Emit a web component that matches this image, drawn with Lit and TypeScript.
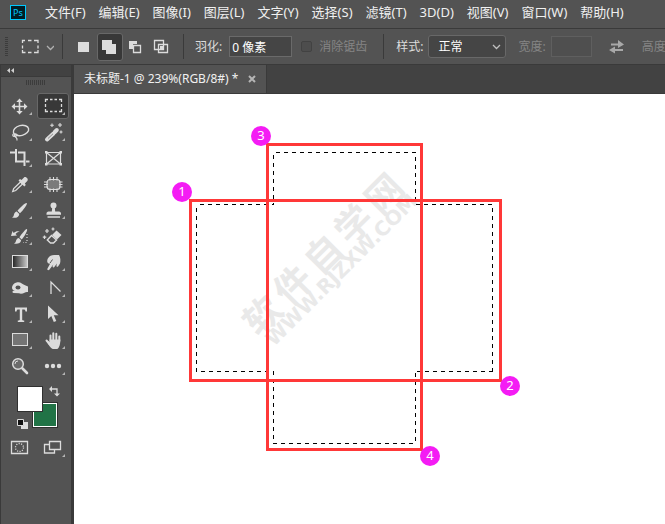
import { LitElement, html, css, svg, nothing } from "lit";
import { customElement } from "lit/decorators.js";
import { classMap } from "lit/directives/class-map.js";

const menus = [
  "文件(F)", "编辑(E)", "图像(I)", "图层(L)", "文字(Y)", "选择(S)",
  "滤镜(T)", "3D(D)", "视图(V)", "窗口(W)", "帮助(H)",
];

interface Tool {
  name: string;
  art: unknown;
  more?: boolean;
  selected?: boolean;
}

const tools: Tool[] = [
  {
    name: "移动工具",
    art: svg`<path class="ln" stroke-width="1.600" d="M15.500 8v11M10 13.500h11"/>
      <path class="fl" d="M15.500 5.500l3.200 3.500h-6.400zM15.500 21.500l3.200-3.500h-6.400zM7.500 13.500l3.500-3.200v6.400zM23.500 13.500l-3.500-3.200v6.400z"/>`,
  },
  {
    name: "矩形选框工具",
    selected: true,
    art: svg`<path class="ln" d="M8.500 9V6.500H11M13 6.500h2.500M17.500 6.500H20M22 6.500h2.500V9M24.500 11v3M24.500 16v2.500H22M20 18.500h-2.500M15.500 18.500H13M11 18.500H8.500V16M8.500 14v-3" stroke-width="1.300"/>`,
  },
  {
    name: "套索工具",
    art: svg`<ellipse class="ln" cx="17" cy="11.500" rx="7.800" ry="5" transform="rotate(-14 17 11.500)" stroke-width="1.400"/>
      <path class="ln" d="M10 14.500c-2 1-1.500 3 .5 3s3.500-1.500 2-2.300-3 .8-1.500 2.300 2.500 1.500 2 4" stroke-width="1.200"/>`,
  },
  {
    name: "魔棒工具",
    art: svg`<path d="M10 20.500l6.500-6" stroke="#dcdcdc" stroke-width="4" stroke-linecap="round"/>
      <path d="M17.800 13l2-2" stroke="#dcdcdc" stroke-width="4" stroke-linecap="round"/>
      <path d="M11 19.500l5-4.700" stroke="#8a8a8a" stroke-width="1"/>
      <path class="ln" d="M15 4.500v3.600M13.200 6.300h3.600M23 4v4M21 6h4M24 11.500v3M22.500 13h3" stroke-width="1.100"/>`,
  },
  {
    name: "裁剪工具",
    art: svg`<path class="ln" d="M12 4v12.500h8.500M14 7.500h6.500v13.500M22 16.500h3.500" stroke-width="2"/>
      <path class="fl" d="M6 6.500h5v2H6z"/>`,
  },
  {
    name: "图框工具",
    more: false,
    art: svg`<path class="ln" d="M9.500 7.500h14v11.500h-14zM9.500 7.500l14 11.500M23.500 7.500l-14 11.500" stroke-width="1.200"/>
      <path class="fl" d="M8 6h2.500v2.500H8zM22.500 6H25v2.500h-2.500zM8 18h2.500v2.500H8zM22.500 18H25v2.500h-2.500z"/>`,
  },
  {
    name: "吸管工具",
    art: svg`<path class="ln" d="M16.500 11l-6.800 6.500-1 3 3-1 6.800-6.500z" stroke-width="1.300"/>
      <path class="fl" d="M14.500 9.500l1.500-1.500 1.500 1 2.500-2.500c1.500-1.500 5 1.500 3.300 3.500L20.800 12.500l1 1.500-1.500 1.500z"/>`,
  },
  {
    name: "修补工具",
    art: svg`<rect x="10" y="8.500" width="13" height="10" rx="3" fill="#7a7a7a" stroke="#dcdcdc" stroke-width="1.200"/>
      <path class="ln" d="M13 6v3.500M16.500 6v3.500M20 6v3.500M13 17.500V21M16.500 17.500V21M20 17.500V21M7 11h4M7 13.500h4M7 16h4M22 11h3.500M22 13.500h3.500M22 16h3.500" stroke-width="1.100"/>`,
  },
  {
    name: "画笔工具",
    art: svg`<path class="fl" d="M22.800 6.200c1 .8-3.800 7.300-6.800 10l-2.500-2.500c2.800-3.300 8.300-8.500 9.300-7.500z"/>
      <path class="fl" d="M12.800 14.500l2.500 2.500c-.3 3.500-4 4.500-7.300 3.500 2-.8 1.500-2 2.200-3.800.5-1.200 1.500-2 2.600-2.200z"/>`,
  },
  {
    name: "仿制图章工具",
    art: svg`<circle class="fl" cx="16.500" cy="8.500" r="3"/>
      <path class="fl" d="M15.300 10h2.400l.5 4.500H22c1.200 0 2 1 2 2v1.300H9.500V16.500c0-1 .8-2 2-2h3.300zM10.500 19.200h12.500v1.500H10.500z"/>`,
  },
  {
    name: "历史记录画笔工具",
    art: svg`<path class="fl" d="M23 6.200c1 .7-2.500 7.300-5.300 10.300l-2.300-2.200c2.500-3.300 6.700-9 7.600-8.100z"/>
      <path class="fl" d="M14.800 15l2.300 2.200c-.5 3.300-3.800 4-7.100 3.300 2-.8 1.600-2 2.300-3.500.6-1.200 1.500-1.900 2.500-2zM7 13l1.500-5 1.200 2c2-2 4.500-2.200 6.300-1.300-2-.2-3.500.8-4.500 2.300l1.500 1.500z"/>
      <path class="ln" d="M23 11v8.500h-4" stroke-dasharray="1 2" stroke-width="1.200"/>`,
  },
  {
    name: "背景橡皮擦工具",
    art: svg`<path class="fl" d="M19.500 7.500l5 4.500-4.500 4.500-5-4.500z"/>
      <path class="ln" d="M14.500 12.500l5 4.500-3 3h-3l-3.200-3z" stroke-width="1.400"/>
      <path class="ln" d="M10 6v4M8 8h4M16 4.500v3M14.500 6h3M7.500 12.500v3.500M5.800 14.200h3.500" stroke-width="1.200"/>`,
  },
  {
    name: "渐变工具",
    art: svg`<defs><linearGradient id="ramp"><stop offset="0" stop-color="#222"/><stop offset="1" stop-color="#ccc"/></linearGradient></defs>
      <rect x="8.500" y="6.500" width="15" height="12" fill="url(#ramp)" stroke="#dcdcdc"/>`,
  },
  {
    name: "涂抹工具",
    art: svg`<path class="fl" d="M12.500 7.500c1.500-1.800 6-1.500 9.500-1.500 1.500 2.500 1.800 6 1 8.500l-1.800 2.700c-.8 1-2 .5-1.700-.7l.5-2-2.700 3.500c-.8 1-2 .4-1.700-.7l.7-1.800-4 5.300c-1 1-2.500.2-1.800-1.200l2.700-5c-1.500.3-3-.6-3-2.300 0-2.300 1-3.500 2.300-4.800z"/>
      <path d="M15.500 10.500c-.8 1-1.500 2.500-2.500 3.500" fill="none" stroke="#535353"/>`,
  },
  {
    name: "海绵工具",
    art: svg`<path class="fl" d="M8 12.800c.3-3.500 3.200-5.600 6.500-5.500 2.500.1 3.500 1.500 5.500 2.500 1.500.7 3 1.200 4 1.700v5.500c-1.500-.3-2.500 0-3.500.7-1.500 1-4 1.300-5.500.6l-5.500-.3c-1.500-.3-1.500-2 0-2.300l1.500-.2c-1.800-.3-3-1-3-2.700z"/>
      <ellipse cx="14" cy="12.500" rx="2.500" ry="2" fill="#535353"/>`,
  },
  {
    name: "转换点工具",
    art: svg`<path class="ln" d="M14 19V7l9.500 9.500" stroke-width="1.300"/>`,
  },
  {
    name: "横排文字工具",
    art: svg`<path class="fl" d="M11 6.500h12v4h-1.500c-.3-1.500-.6-2-1.800-2h-1.500v10c0 .8.500 1 2 1V21h-6.400v-1.500c1.500 0 2-.2 2-1v-10h-1.500c-1.200 0-1.500.5-1.800 2H11z"/>`,
  },
  {
    name: "路径选择工具",
    art: svg`<path class="fl" d="M11 4.500v13.500l3.300-3 2.500 6 2.500-1-2.500-5.800h4.700z"/>`,
  },
  {
    name: "矩形工具",
    art: svg`<rect x="8.500" y="6.500" width="15" height="12" fill="#757575" stroke="#dcdcdc"/>`,
  },
  {
    name: "抓手工具",
    art: svg`<path d="M13.500 14V8.500M16.300 13V6.300M19.300 13V6.800M22.300 14V9.500M9.500 13.500l3 3.500" fill="none" stroke="#dcdcdc" stroke-width="2" stroke-linecap="round"/>
      <path class="fl" d="M12.500 12.500h10.800c.2 4-1 8.500-3 9.500h-4.500c-2.500-.8-5-5.500-6-7.500l1.500-.5 1.200 1.500z"/>`,
  },
  {
    name: "缩放工具",
    more: false,
    art: svg`<circle cx="14" cy="11" r="5.300" fill="#6b6b6b" stroke="#dcdcdc" stroke-width="1.500"/>
      <path class="ln" d="M11 11a3 3 0 0 1 3-3" stroke-width="1"/>
      <path d="M18.500 15.500l4.500 4.500" stroke="#dcdcdc" stroke-width="2.600" stroke-linecap="round"/>`,
  },
  {
    name: "编辑工具栏",
    art: svg`<circle class="fl" cx="10" cy="13" r="2.200"/><circle class="fl" cx="16" cy="13" r="2.200"/><circle class="fl" cx="22" cy="13" r="2.200"/>`,
  },
];

const modes = [
  { name: "新选区", art: svg`<path class="fl" d="M7 8h11v10H7z"/>` },
  { name: "添加到选区", art: svg`<path class="fl" d="M5 6h10v4h4v10H9v-4H5z"/>` },
  {
    name: "从选区减去",
    art: svg`<path class="fl" d="M6 7h8v3h-4v5H6z"/><path class="ln" d="M10.500 11.500h7v7h-7z" stroke-width="1.300"/>`,
  },
  {
    name: "与选区交叉",
    art: svg`<path class="ln" d="M5.500 6.500h9v9h-9zM9.500 10.500h9v8h-9z" stroke-width="1.300"/><path class="fl" d="M11 12h3v3h-3z"/>`,
  },
];

const iconStyles = css`
  .ln { fill: none; stroke: #dcdcdc; }
  .fl { fill: #dcdcdc; }
  svg { display: block; }
  button {
    margin: 0;
    padding: 0;
    border: 0;
    background: none;
    color: inherit;
    font: inherit;
  }
`;

@customElement("menu-bar")
class MenuBar extends LitElement {
  static styles = [iconStyles, css`
    :host {
      display: flex;
      align-items: center;
      height: 28px;
      padding-left: 10px;
      border-bottom: 1px solid #3a3a3a;
      color: #f0f0f0;
      font-size: 13px;
      line-height: 20px;
      white-space: nowrap;
      overflow: hidden;
    }
    .logo {
      box-sizing: border-box;
      width: 16px;
      height: 15px;
      margin: 0 19px 4px 0;
      border: 1px solid #00c8ff;
      background: #001d26;
      color: #00c8ff;
      font-size: 9px;
      line-height: 13px;
      text-align: center;
    }
    nav { display: flex; gap: 13px; padding-bottom: 4px; }
  `];
  render() {
    return html`
      <span class="logo">Ps</span>
      <nav>${menus.map((m) => html`<button>${m}</button>`)}</nav>
    `;
  }
}

@customElement("options-bar")
class OptionsBar extends LitElement {
  static styles = [iconStyles, css`
    :host {
      display: flex;
      align-items: center;
      height: 35px;
      padding-left: 5px;
      border-bottom: 1px solid #3a3a3a;
      color: #dcdcdc;
      font-size: 12px;
      line-height: 20px;
      white-space: nowrap;
      overflow: hidden;
    }
    :host > * { flex: none; }
    .grip {
      width: 3px;
      height: 20px;
      margin-right: 12px;
      background: repeating-linear-gradient(#3c3c3c 0 1px, #535353 1px 2px);
    }
    .sep { width: 1px; height: 25px; margin: 0 8px; background: #3a3a3a; }
    .modes { display: flex; }
    .modes button { box-sizing: border-box; width: 26px; height: 28px; padding-top: 1px; border-radius: 3px; }
    .modes .on {
      background: #383838;
      box-shadow: inset 0 0 0 1px #686868;
    }
    label { display: flex; align-items: center; gap: 5px; }
    .feather { gap: 7px; margin: 0 9px 0 3px; }
    .alias { gap: 7px; margin-right: 8px; }
    .style { margin: 0 12px 0 4px; }
    .dim { color: #858585; }
    input[type="text"] {
      box-sizing: border-box;
      height: 21px;
      margin: 0;
      padding: 0 2px;
      border: 1px solid #6a6a6a;
      border-radius: 0;
      background: #454545;
      color: #fff;
      font: inherit;
    }
    .feather input[type="text"] { width: 63px; }
    .size input[type="text"] { width: 41px; }
    input[type="text"]:disabled { background: #4f4f4f; border-color: #5f5f5f; }
    input[type="checkbox"] {
      appearance: none;
      box-sizing: border-box;
      width: 11px;
      height: 11px;
      margin: 0;
      border: 1px solid #424242;
      border-radius: 2px;
      background: #4d4d4d;
    }
    .pick { position: relative; }
    .pick svg { position: absolute; right: 4px; top: 9px; pointer-events: none; }
    select {
      appearance: none;
      box-sizing: border-box;
      display: block;
      width: 78px;
      height: 23px;
      margin: 0;
      padding: 0 9px;
      border: 1px solid #686868;
      border-radius: 3px;
      background: #454545;
      color: #fff;
      font: inherit;
    }
    .swap { margin: 0 17px; }
  `];
  render() {
    return html`
      <span class="grip"></span>
      <button aria-label="矩形选框工具">
        <svg width="34" height="16">
          <path class="ln" stroke-width="1.300" d="M2.500 4V1.500H5M8 1.500h3.500M14 1.500h4V4M18 6.500v3M18 11v2.500h-4M11.500 13.500H8M5.500 13.500h-3V11M2.500 9.500v-3"/>
          <path fill="none" stroke="#b0b0b0" stroke-width="1.300" d="M27 7l3.500 3.500L34 7"/>
        </svg>
      </button>
      <span class="sep"></span>
      <div class="modes">
        ${modes.map((m, i) => html`
          <button class=${classMap({ on: i === 1 })} aria-label=${m.name}>
            <svg width="26" height="26">${m.art}</svg>
          </button>`)}
      </div>
      <span class="sep"></span>
      <label class="feather">羽化: <input type="text" value="0 像素" /></label>
      <label class="alias dim"><input type="checkbox" disabled />消除锯齿</label>
      <span class="sep"></span>
      <label class="style">样式:
        <span class="pick">
          <select><option>正常</option></select>
          <svg width="10" height="7"><path fill="none" stroke="#c0c0c0" stroke-width="1.300" d="M1 1l3.500 3.500L8 1"/></svg>
        </span>
      </label>
      <label class="size dim">宽度: <input type="text" disabled /></label>
      <button class="swap" aria-label="高度和宽度互换">
        <svg width="16" height="14" fill="#a8a8a8"><path d="M2 3.500h7V0l6 4.500L9 8V5.500H2zM14 9H6V6.500L0 10l6 3.500V11h8z"/></svg>
      </button>
      <label class="size dim">高度 <input type="text" disabled /></label>
    `;
  }
}

@customElement("tool-panel")
class ToolPanel extends LitElement {
  static styles = [iconStyles, css`
    :host {
      display: block;
      box-sizing: border-box;
      flex: none;
      width: 74px;
      border: solid #3a3a3a;
      border-width: 0 3px 0 1px;
      background: #535353;
    }
    .head {
      display: flex;
      height: 11px;
      padding-left: 5px;
      border-bottom: 1px solid #3a3a3a;
      background: #424242;
    }
    .grip {
      width: 20px;
      height: 5px;
      margin: 3px 0 8px 25px;
      background: repeating-linear-gradient(90deg, #3c3c3c 0 1px, #535353 1px 2px);
    }
    .tools { display: grid; grid-template-columns: 32px 32px; column-gap: 1px; padding-left: 3px; }
    .tools button { height: 26px; border-radius: 3px; }
    .tools .on { background: #383838; box-shadow: inset 0 0 0 1px #686868; }
    .colors { position: relative; height: 48px; margin: 7px 0 1px; }
    .colors button { position: absolute; box-sizing: border-box; }
    .fore, .back { width: 26px; height: 26px; border: 1px solid #303030; }
    .fore { left: 16px; top: 0; background: #fff; }
    .back { left: 31px; top: 16px; background: #217346; box-shadow: inset 0 0 0 1px #fff; }
    .flip { left: 48px; top: 0; }
    .reset { left: 16px; top: 33px; }
  `];
  render() {
    return html`
      <div class="head">
        <button aria-label="折叠面板">
          <svg width="10" height="11" fill="#d0d0d0"><path d="M4 3v5L1 5.500zM8 3v5L5 5.500z"/></svg>
        </button>
      </div>
      <div class="grip"></div>
      <div class="tools">
        ${tools.map((t) => html`
          <button class=${classMap({ on: !!t.selected })} aria-label=${t.name}>
            <svg width="32" height="26">
              ${t.art}
              ${t.more === false ? nothing : svg`<path fill="#b5b5b5" d="M28 19v3h-3z"/>`}
            </svg>
          </button>`)}
      </div>
      <div class="colors">
        <button class="back" aria-label="背景色"></button>
        <button class="fore" aria-label="前景色"></button>
        <button class="flip" aria-label="切换前景色和背景色">
          <svg width="11" height="11"><path class="ln" stroke-width="1.300" d="M3 3h5v5"/><path class="fl" d="M0 3l3-3v6zM5 7.500h6L8 10.500z"/></svg>
        </button>
        <button class="reset" aria-label="默认前景色和背景色">
          <svg width="11" height="11"><path class="fl" d="M4 3h7v7H4z"/><path d="M.500.500h6v6h-6z" fill="#111" stroke="#dcdcdc"/></svg>
        </button>
      </div>
      <div class="tools">
        <button aria-label="以快速蒙版模式编辑">
          <svg width="32" height="26">
            <path class="ln" stroke-width="1.300" d="M7.500 6.500h16v12h-16z"/>
            <circle class="ln" cx="15.500" cy="12.500" r="4" stroke-dasharray="1.100 1.400" stroke-width="1.300"/>
          </svg>
        </button>
        <button aria-label="更改屏幕模式">
          <svg width="32" height="26">
            <path class="ln" stroke-width="1.300" d="M12 9.500H7.500v8.500h10v-3M12.500 6.500h11v8h-11z"/>
            <path fill="#b5b5b5" d="M28 19v3h-3z"/>
          </svg>
        </button>
      </div>
    `;
  }
}

/** Edges of the combined selection: start x, start y, direction, length. */
const edges: [number, number, "h" | "v", number][] = [
  [199, 58, "h", 143], [199, 58, "v", 53], [341, 58, "v", 53],
  [122, 110, "h", 77], [341, 110, "h", 78], [122, 110, "v", 168],
  [418, 110, "v", 168], [122, 277, "h", 77], [341, 277, "h", 78],
  [199, 277, "v", 73], [341, 277, "v", 73], [199, 349, "h", 143],
];

const badges = [
  { n: 1, x: 108, y: 98 },
  { n: 2, x: 436, y: 292 },
  { n: 3, x: 187, y: 42 },
  { n: 4, x: 356, y: 362 },
];

@customElement("document-view")
class DocumentView extends LitElement {
  static styles = [iconStyles, css`
    :host { display: flex; flex-direction: column; flex: 1; min-width: 0; }
    .tabs {
      display: flex;
      height: 28px;
      border-bottom: 1px solid #3a3a3a;
      background: #424242;
    }
    .tab {
      display: flex;
      align-items: center;
      gap: 10px;
      padding: 0 10px;
      border-right: 1px solid #3a3a3a;
      background: #535353;
      color: #f0f0f0;
      font-size: 12px;
      line-height: 20px;
      white-space: nowrap;
    }
    .stage { flex: 1; min-height: 360px; display: grid; background: #fff; overflow: hidden; }
    .art { width: 100%; height: 100%; }
    .ants { stroke: #000; stroke-dasharray: 4 4; shape-rendering: crispEdges; }
    .frame { fill: none; stroke: #ff3838; stroke-width: 3; }
    .badge { fill: #f41cf4; }
    .num { fill: #fff; font-size: 13px; text-anchor: middle; }
    .mark { fill: #e9e9e9; font-weight: 700; }
    .big { font-size: 37px; }
    .small { font-family: "DejaVu Sans", sans-serif; font-size: 20px; }
  `];
  render() {
    return html`
      <div class="tabs">
        <div class="tab">
          <span>未标题-1 @ 239%(RGB/8#) *</span>
          <button aria-label="关闭">
            <svg width="8" height="8"><path d="M1 1l6 6M7 1l-6 6" stroke="#b5b5b5" stroke-width="2"/></svg>
          </button>
        </div>
      </div>
      <div class="stage">
        <svg class="art">
          <g class="mark" transform="translate(195 234) rotate(-45)">
            <text class="big" x="-14 29 72 115 158" y="0">软件自学网</text>
            <text class="small" x="-10" y="17">WWW.RJZXW.COM</text>
          </g>
          ${edges.map(([x, y, dir, len]) => svg`
            <line class="ants" stroke-dashoffset=${(x + y + 4) % 8}
              x1=${dir === "h" ? x : x + 0.5} y1=${dir === "h" ? y + 0.5 : y}
              x2=${dir === "h" ? x + len : x + 0.5} y2=${dir === "h" ? y + 0.5 : y + len} />`)}
          <rect class="frame" x="116.500" y="106.500" width="310" height="180" />
          <rect class="frame" x="193.500" y="50.500" width="154" height="305" />
          ${badges.map((b) => svg`
            <circle class="badge" cx=${b.x} cy=${b.y} r="10" />
            <text class="num" x=${b.x} y=${b.y + 4}>${b.n}</text>`)}
        </svg>
      </div>
    `;
  }
}

@customElement("app-root")
class AppRoot extends LitElement {
  static styles = css`
    :host {
      display: flex;
      flex-direction: column;
      min-height: 100vh;
      background: #535353;
      font-family: "Noto Sans", "Noto Sans CJK SC", sans-serif;
    }
    .work { display: flex; flex: 1; min-height: 0; }
  `;
  render() {
    return html`
      <menu-bar></menu-bar>
      <options-bar></options-bar>
      <div class="work">
        <tool-panel></tool-panel>
        <document-view></document-view>
      </div>
    `;
  }
}
